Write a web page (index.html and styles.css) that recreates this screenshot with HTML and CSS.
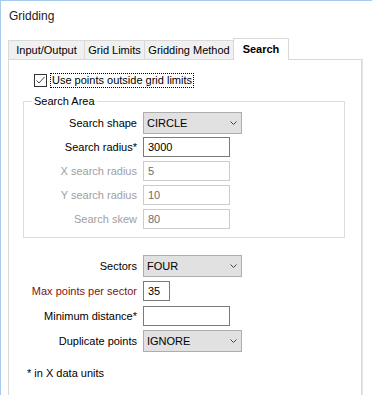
FILE: index.html
```html
<!DOCTYPE html>
<html lang="en">
<head>
  <meta charset="UTF-8" />
  <title>Gridding</title>
  <link rel="stylesheet" href="styles.css">
</head>
<body>
  <div class="window">
    <div class="title">Gridding</div>

    <!-- Tab strip -->
    <div class="tabs">
      <div class="tab tab-io">Input/Output</div>
      <div class="tab tab-limits">Grid Limits</div>
      <div class="tab tab-method">Gridding Method</div>
      <div class="tab tab-search active">Search</div>
    </div>

    <div class="panel">
      <div class="check-row">
        <span class="checkbox">
          <svg width="13" height="13" viewBox="0 0 13 13">
            <rect x="0.5" y="0.5" width="12" height="12" fill="#fff" stroke="#333"/>
            <polyline points="2.5,6.5 5,9 10.5,3" fill="none" stroke="#444" stroke-width="1"/>
          </svg>
        </span>
        <span class="check-label">Use points outside grid limits</span>
      </div>

      <fieldset class="group">
        <legend>Search Area</legend>
        <div class="row">
          <span class="lbl">Search shape</span>
          <div class="select">CIRCLE
            <svg width="7" height="4" viewBox="0 0 7 4"><polyline points="0.5,0.5 3.5,3.5 6.5,0.5" fill="none" stroke="#444"/></svg>
          </div>
        </div>
        <div class="row">
          <span class="lbl">Search radius*</span>
          <div class="input">3000</div>
        </div>
        <div class="row">
          <span class="lbl disabled">X search radius</span>
          <div class="input disabled">5</div>
        </div>
        <div class="row">
          <span class="lbl disabled">Y search radius</span>
          <div class="input disabled">10</div>
        </div>
        <div class="row">
          <span class="lbl disabled">Search skew</span>
          <div class="input disabled">80</div>
        </div>
      </fieldset>

      <div class="rows">
        <div class="row">
          <span class="lbl">Sectors</span>
          <div class="select">FOUR
            <svg width="7" height="4" viewBox="0 0 7 4"><polyline points="0.5,0.5 3.5,3.5 6.5,0.5" fill="none" stroke="#444"/></svg>
          </div>
        </div>
        <div class="row">
          <span class="lbl warn">Max points per sector</span>
          <div class="input small">35</div>
        </div>
        <div class="row">
          <span class="lbl">Minimum distance*</span>
          <div class="input"></div>
        </div>
        <div class="row">
          <span class="lbl">Duplicate points</span>
          <div class="select">IGNORE
            <svg width="7" height="4" viewBox="0 0 7 4"><polyline points="0.5,0.5 3.5,3.5 6.5,0.5" fill="none" stroke="#444"/></svg>
          </div>
        </div>
      </div>

      <p class="note">* in X data units</p>
    </div>
  </div>
</body>
</html>
```

FILE: styles.css
```css
html, body {
  margin: 0;
  height: 395px;
  overflow: hidden;
  background-color: #fff;
}

body {
  font-family: "Liberation Sans", Arial, sans-serif;
  font-size: 11px;
  color: #000;
}

.window {
  border-left: 1px solid #a7cbee;
  border-top: 1px solid #a7cbee;
  height: 394px;
}

.title {
  height: 37px;
  box-sizing: border-box;
  padding: 8px 0 0 8px;
  font-size: 12px;
  line-height: 14px;
  color: #222;
}

/* Tabs */
.tabs {
  display: flex;
  align-items: flex-end;
  height: 21px;
  margin-left: 7px;
}

.tab {
  height: 19px;
  box-sizing: border-box;
  border: 1px solid #d9d9d9;
  border-bottom: none;
  background-color: #f0f0f0;
  margin-right: -1px;
  text-align: center;
  line-height: 18px;
  color: #000;
}

.tab-io { width: 77px; }
.tab-limits { width: 61px; }
.tab-method { width: 90px; }
.tab-search { width: 56px; }

.tab.active {
  height: 22px;
  margin-bottom: -1px;
  background-color: #fff;
  font-weight: bold;
  line-height: 20px;
  position: relative;
  z-index: 1;
}

/* Panel */
.panel {
  margin-left: 7px;
  width: 354px;
  height: 336px;
  box-sizing: border-box;
  border: 1px solid #d9d9d9;
  border-bottom: none;
  box-shadow: 1px 0 0 #e6e6e6;
  padding-top: 13px;
}

.check-row {
  display: flex;
  align-items: center;
  margin-left: 25px;
  height: 15px;
}

.checkbox {
  display: flex;
  width: 13px;
  height: 13px;
  margin-right: 3px;
}

.check-label {
  border: 1px dotted #000;
  padding: 0 1px;
  line-height: 13px;
}

/* Group box */
.group {
  margin: 7px 0 0 14px;
  padding: 3px 0 6px 0;
  width: 322px;
  min-width: 0;
  box-sizing: border-box;
  border: 1px solid #dcdcdc;
}

.group legend {
  margin-left: 8px;
  padding: 0 2px;
  line-height: 13px;
  font-size: 11px;
}

.row {
  display: flex;
  align-items: center;
  height: 24px;
}

.lbl {
  flex: none;
  width: 113px;
  margin-right: 6px;
  text-align: right;
}

.rows {
  display: flex;
  flex-direction: column;
  gap: 1px;
  margin-top: 16px;
}

.rows .lbl {
  width: 128px;
}

.lbl.disabled {
  color: #a0a0a0;
}

.lbl.warn {
  color: #7f1414;
}

.select {
  width: 99px;
  height: 22px;
  box-sizing: border-box;
  border: 1px solid #adadad;
  background-color: #e1e1e1;
  display: flex;
  align-items: center;
  justify-content: space-between;
  padding: 0 4px 0 3px;
}

.input {
  width: 87px;
  height: 20px;
  box-sizing: border-box;
  border: 1px solid #7a7a7a;
  display: flex;
  align-items: center;
  padding-left: 4px;
}

.input.small {
  width: 27px;
}

.input.disabled {
  border-color: #cccccc;
  color: #6d6d6d;
}

.note {
  margin: 14px 0 0 18px;
  line-height: 13px;
}
```
